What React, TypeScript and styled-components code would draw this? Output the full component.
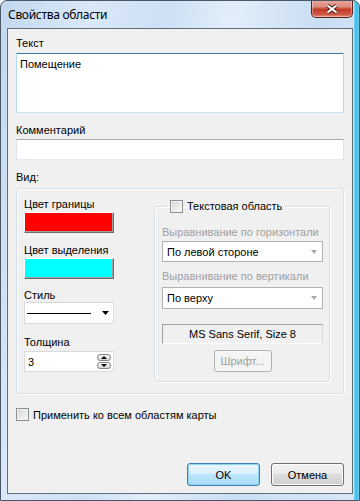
import React from 'react';
import styled, { createGlobalStyle } from 'styled-components';

const GlobalStyle = createGlobalStyle`
  *, *::before, *::after { box-sizing: border-box; }
  html, body { margin: 0; padding: 0; }
  body { width: 360px; height: 501px; overflow: hidden; background: #fff; }
`;

const Window = styled.div`
  width: 360px;
  height: 501px;
  display: flex;
  flex-direction: column;
  border: 1px solid #4a5766;
  border-radius: 7px 7px 0 0;
  overflow: hidden;
  background:
    linear-gradient(to right, transparent 352px, #b6e2f6 353px, #3fc2ef 354px, #3fc2ef 356px, #7ccdef 358px),
    linear-gradient(100deg, #c2d8ef 0%, #dae8f8 20%, #cde0f4 38%, #e2eefa 52%, #cadef3 72%, #d8e7f7 100%);
  font-family: 'Liberation Sans', Arial, sans-serif;
  font-size: 11px;
  color: #000;
`;

const TitleBar = styled.div`
  height: 27px;
  flex: none;
  display: flex;
  align-items: flex-start;
  padding: 0 6px 0 7px;
`;

const Title = styled.span`
  margin-top: 6px;
  font-family: 'Noto Sans', 'Open Sans', sans-serif;
  font-size: 12px;
  letter-spacing: -0.3px;
  line-height: 16px;
`;

const CloseButton = styled.div`
  margin-left: auto;
  margin-top: -1px;
  width: 42px;
  height: 18px;
  border: 1px solid #5b2119;
  border-top: none;
  border-radius: 0 0 5px 5px;
  background: linear-gradient(#e9a99e 0%, #dc8a7b 40%, #c13b27 55%, #cf5a45 85%, #e5907d 100%);
  box-shadow: inset 0 0 0 1px rgba(255, 255, 255, 0.35);
  display: flex;
  align-items: center;
  justify-content: center;
`;

const Client = styled.div`
  flex: 1;
  margin: 0 6px 6px;
  border: 1px solid #5f6e7d;
  background: #f0f0f0;
  padding: 8px 8px 7px;
  display: flex;
  flex-direction: column;
`;

const FieldLabel = styled.div<{ $top?: number; $gap?: number; $disabled?: boolean }>`
  line-height: 13px;
  margin-top: ${p => p.$top ?? 0}px;
  margin-bottom: ${p => p.$gap ?? 0}px;
  color: ${p => (p.$disabled ? '#a0a0a0' : '#000')};
  white-space: nowrap;
`;

const TextArea = styled.textarea`
  display: block;
  width: 100%;
  height: 60px;
  resize: none;
  overflow: hidden;
  margin: 0;
  padding: 4px 3px;
  font: inherit;
  line-height: 13px;
  color: #000;
  background: #fff;
  border: 1px solid;
  border-color: #3d7bad #b7d9ed #c7e2f1 #b7d9ed;
  outline: none;
`;

const TextInput = styled.input`
  display: block;
  width: 100%;
  height: 21px;
  margin: 0;
  padding: 0 3px;
  font: inherit;
  background: #fff;
  border: 1px solid;
  border-color: #abadb3 #e2e3ea #e3e9ef #e2e3ea;
  outline: none;
`;

const GroupBox = styled.div`
  margin-top: 4px;
  height: 206px;
  border: 1px solid #d5dfe5;
  border-radius: 3px;
  box-shadow: inset 1px 1px 0 #fff, 1px 1px 0 #fff;
  padding: 9px 0 0 7px;
  display: grid;
  grid-template-columns: 90px 176px;
  column-gap: 40px;
  align-items: start;
`;

const Column = styled.div`
  display: flex;
  flex-direction: column;
`;

const Swatch = styled.div<{ $color: string }>`
  height: 21px;
  background: ${p => p.$color};
  border-top: 1px solid #fff;
  border-left: 1px solid #fff;
  border-right: 1px solid #6d6d6d;
  border-bottom: 1px solid #6d6d6d;
  box-shadow: inset -1px -1px 0 #a0a0a0;
`;

const LineCombo = styled.div`
  height: 22px;
  background: #fff;
  border: 1px solid #dadada;
  display: flex;
  align-items: center;
  padding: 0 4px 0 2px;
`;

const SampleLine = styled.div`
  width: 64px;
  height: 1px;
  background: #000;
`;

const ArrowSlot = styled.span`
  margin-left: auto;
  display: flex;
`;

const SpinBox = styled.div`
  height: 21px;
  background: #fff;
  border: 1px solid #dadada;
  display: flex;
  align-items: center;
  padding: 0 2px 0 3px;
`;

const SpinButtons = styled.div`
  margin-left: auto;
  display: flex;
  flex-direction: column;
  gap: 1px;
`;

const SpinButton = styled.div`
  width: 14px;
  height: 7px;
  border: 1px solid #858585;
  border-radius: 3px;
  background: linear-gradient(#f6f6f6, #d6d6d6);
  display: flex;
  align-items: center;
  justify-content: center;
`;

const SubGroup = styled.fieldset`
  margin: 2px 0 0;
  min-width: 0;
  height: 182px;
  border: 1px solid #d5dfe5;
  border-radius: 3px;
  box-shadow: inset 1px 1px 0 #fff, 1px 1px 0 #fff;
  padding: 13px 6px 9px 7px;
  display: flex;
  flex-direction: column;
`;

const Legend = styled.legend`
  margin-left: 6px;
  padding: 0 2px;
  display: flex;
  align-items: center;
  gap: 4px;
  line-height: 13px;
`;

const CheckBox = styled.span`
  width: 13px;
  height: 13px;
  flex: none;
  border: 1px solid #8e8f8f;
  background: linear-gradient(135deg, #cfd1d4 0%, #eceded 60%, #f8f8f8 100%);
  box-shadow: inset 0 0 0 1px #f4f4f4;
`;

const Combo = styled.div<{ $top?: number }>`
  height: 22px;
  margin-top: ${p => p.$top ?? 0}px;
  background: #fff;
  border: 1px solid #b2b2b2;
  display: flex;
  align-items: center;
  padding: 0 5px 0 4px;
  white-space: nowrap;
`;

const FontBox = styled.div`
  margin-top: 15px;
  height: 21px;
  border: 1px solid;
  border-color: #a0a0a0 #d8d8d8 #fff #a0a0a0;
  display: flex;
  align-items: center;
  justify-content: center;
`;

const FontButton = styled.div`
  margin-top: 6px;
  align-self: center;
  width: 58px;
  height: 23px;
  border: 1px solid #adb2b5;
  border-radius: 3px;
  background: #f4f4f4;
  color: #a0a0a0;
  display: flex;
  align-items: center;
  justify-content: center;
`;

const CheckRow = styled.label`
  margin-top: 14px;
  height: 13px;
  display: flex;
  align-items: center;
  gap: 4px;
`;

const Buttons = styled.div`
  margin-top: auto;
  display: flex;
  justify-content: flex-end;
  gap: 11px;
`;

const DialogButton = styled.button<{ $default?: boolean }>`
  width: 73px;
  height: 23px;
  margin: 0;
  padding: 0;
  font: inherit;
  color: #000;
  border-radius: 3px;
  border: 1px solid ${p => (p.$default ? '#3c7fb1' : '#707070')};
  background: ${p =>
    p.$default
      ? 'linear-gradient(#eaf6fd 0%, #d9f0fc 45%, #bee6fd 50%, #a7d9f5 100%)'
      : 'linear-gradient(#f2f2f2 0%, #ebebeb 45%, #dddddd 50%, #cfcfcf 100%)'};
  box-shadow: inset 0 0 0 1px ${p => (p.$default ? '#8fd3f5' : '#fcfcfc')};
`;

const ArrowDown = ({ color, w = 7 }: { color: string; w?: number }) => (
  <svg width={w} height={4} viewBox={`0 0 ${w} 4`}>
    <path d={`M0 0H${w}L${w / 2} 4Z`} fill={color} />
  </svg>
);

const Tri = ({ up }: { up?: boolean }) => (
  <svg width="6" height="3" viewBox="0 0 6 3">
    <path d={up ? 'M0 3H6L3 0Z' : 'M0 0H6L3 3Z'} fill="#000" />
  </svg>
);

export default function App() {
  return (
    <>
      <GlobalStyle />
      <Window>
        <TitleBar>
          <Title>Свойства области</Title>
          <CloseButton>
            <svg width="14" height="10" viewBox="0 0 14 10">
              <path d="M2.5 1.5L11.5 8.5M11.5 1.5L2.5 8.5" stroke="#4b1c15" strokeWidth="4" />
              <path d="M2.5 1.5L11.5 8.5M11.5 1.5L2.5 8.5" stroke="#fff" strokeWidth="2.2" />
            </svg>
          </CloseButton>
        </TitleBar>
        <Client>
          <FieldLabel $gap={3}>Текст</FieldLabel>
          <TextArea defaultValue="Помещение" />
          <FieldLabel $top={11} $gap={2}>Комментарий</FieldLabel>
          <TextInput defaultValue="" />
          <FieldLabel $top={11}>Вид:</FieldLabel>
          <GroupBox>
            <Column>
              <FieldLabel $gap={1}>Цвет границы</FieldLabel>
              <Swatch $color="#ff0000" />
              <FieldLabel $top={11} $gap={1}>Цвет выделения</FieldLabel>
              <Swatch $color="#00ffff" />
              <FieldLabel $top={10}>Стиль</FieldLabel>
              <LineCombo>
                <SampleLine />
                <ArrowSlot>
                  <ArrowDown color="#000" />
                </ArrowSlot>
              </LineCombo>
              <FieldLabel $top={12} $gap={2}>Толщина</FieldLabel>
              <SpinBox>
                3
                <SpinButtons>
                  <SpinButton><Tri up /></SpinButton>
                  <SpinButton><Tri /></SpinButton>
                </SpinButtons>
              </SpinBox>
            </Column>
            <SubGroup>
              <Legend>
                <CheckBox />
                Текстовая область
              </Legend>
              <FieldLabel $disabled $gap={2}>Выравнивание по горизонтали</FieldLabel>
              <Combo>
                По левой стороне
                <ArrowSlot>
                  <ArrowDown color="#a8a8a8" w={6} />
                </ArrowSlot>
              </Combo>
              <FieldLabel $disabled $top={8} $gap={4}>Выравнивание по вертикали</FieldLabel>
              <Combo>
                По верху
                <ArrowSlot>
                  <ArrowDown color="#a8a8a8" w={6} />
                </ArrowSlot>
              </Combo>
              <FontBox>MS Sans Serif, Size 8</FontBox>
              <FontButton>Шрифт...</FontButton>
            </SubGroup>
          </GroupBox>
          <CheckRow>
            <CheckBox />
            Применить ко всем областям карты
          </CheckRow>
          <Buttons>
            <DialogButton $default>OK</DialogButton>
            <DialogButton>Отмена</DialogButton>
          </Buttons>
        </Client>
      </Window>
    </>
  );
}
